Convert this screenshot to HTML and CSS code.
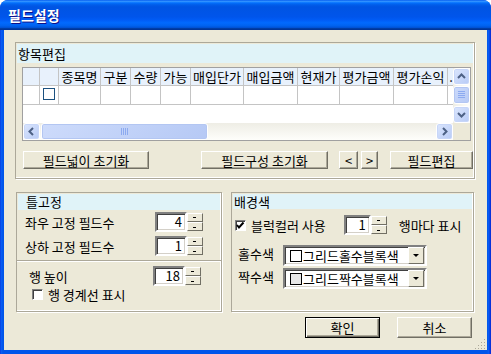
FILE: index.html
```html
<!DOCTYPE html>
<html>
<head lang="ko">
    <meta charset="UTF-8">
    <title>필드설정</title>
    <link rel="stylesheet" href="styles.css">
</head>
<body>
    <div class="window">
        <div class="titlebar"><span class="title">필드설정</span></div>
        <div class="client">
            <div class="group group-edit">
                <div class="group-head">항목편집</div>
                <div class="grid">
                    <div class="grid-body">
                        <div class="grid-row grid-head">
                            <div class="cell w17"></div>
                            <div class="cell w19"></div>
                            <div class="cell w42">종목명</div>
                            <div class="cell w30">구분</div>
                            <div class="cell w30">수량</div>
                            <div class="cell w30">가능</div>
                            <div class="cell w53">매입단가</div>
                            <div class="cell w54">매입금액</div>
                            <div class="cell w42">현재가</div>
                            <div class="cell w54">평가금액</div>
                            <div class="cell w54">평가손익</div>
                            <div class="cell w6">.</div>
                        </div>
                        <div class="grid-row grid-data">
                            <div class="cell w17"></div>
                            <div class="cell w19"><span class="grid-check"></span></div>
                            <div class="cell w42"></div>
                            <div class="cell w30"></div>
                            <div class="cell w30"></div>
                            <div class="cell w30"></div>
                            <div class="cell w53"></div>
                            <div class="cell w54"></div>
                            <div class="cell w42"></div>
                            <div class="cell w54"></div>
                            <div class="cell w54"></div>
                            <div class="cell w6"></div>
                        </div>
                    </div>
                    <div class="vscroll">
                        <div class="sb-btn">
                            <svg width="15" height="15" viewBox="0 0 15 15"><polyline points="4,9 7.5,5.5 11,9" fill="none" stroke="#4d6185" stroke-width="2"/></svg>
                        </div>
                        <div class="sb-thumb sb-thumb-v">
                            <svg width="8" height="8" viewBox="0 0 8 8"><path d="M0 0.5H7M0 2.5H7M0 4.5H7M0 6.5H7" stroke="#8caaf0"/></svg>
                        </div>
                        <div class="sb-track"></div>
                        <div class="sb-btn">
                            <svg width="15" height="15" viewBox="0 0 15 15"><polyline points="4,6 7.5,9.5 11,6" fill="none" stroke="#4d6185" stroke-width="2"/></svg>
                        </div>
                    </div>
                    <div class="hscroll">
                        <div class="sb-btn">
                            <svg width="15" height="15" viewBox="0 0 15 15"><polyline points="9,4 5.5,7.5 9,11" fill="none" stroke="#4d6185" stroke-width="2"/></svg>
                        </div>
                        <div class="sb-thumb sb-thumb-h">
                            <svg width="8" height="8" viewBox="0 0 8 8"><path d="M0.5 0V7M2.5 0V7M4.5 0V7M6.5 0V7" stroke="#8caaf0"/></svg>
                        </div>
                        <div class="sb-track"></div>
                        <div class="sb-btn">
                            <svg width="15" height="15" viewBox="0 0 15 15"><polyline points="6,4 9.5,7.5 6,11" fill="none" stroke="#4d6185" stroke-width="2"/></svg>
                        </div>
                    </div>
                    <div class="corner"></div>
                </div>
                <div class="btn-row">
                    <button class="btn btn-reset">필드넓이 초기화</button>
                    <button class="btn btn-layout">필드구성 초기화</button>
                    <button class="btn btn-prev">&lt;</button>
                    <button class="btn btn-next">&gt;</button>
                    <button class="btn btn-fields">필드편집</button>
                </div>
            </div>

            <div class="lower">
                <div class="group group-freeze">
                    <div class="group-head">틀고정</div>
                    <div class="freeze-row">
                        <span class="freeze-label">좌우 고정 필드수</span>
                        <div class="spin">
                            <div class="spin-edit">4</div>
                            <div class="spin-btns"><span class="spin-up"></span><span class="spin-down"></span></div>
                        </div>
                    </div>
                    <div class="freeze-row">
                        <span class="freeze-label">상하 고정 필드수</span>
                        <div class="spin">
                            <div class="spin-edit">1</div>
                            <div class="spin-btns"><span class="spin-up"></span><span class="spin-down"></span></div>
                        </div>
                    </div>
                    <div class="separator"></div>
                    <div class="freeze-row height-row">
                        <span class="freeze-label">행 높이</span>
                        <div class="spin">
                            <div class="spin-edit">18</div>
                            <div class="spin-btns"><span class="spin-up"></span><span class="spin-down"></span></div>
                        </div>
                    </div>
                    <label class="check-row">
                        <span class="check"></span>
                        <span>행 경계선 표시</span>
                    </label>
                </div>

                <div class="group group-color">
                    <div class="group-head">배경색</div>
                    <div class="block-row">
                        <span class="check checked">
                            <svg width="9" height="9" viewBox="0 0 9 9"><path d="M1 4L3 6.5L7.5 1.5" fill="none" stroke="#000" stroke-width="2"/></svg>
                        </span>
                        <span class="block-label">블럭컬러 사용</span>
                        <div class="spin spin-small">
                            <div class="spin-edit">1</div>
                            <div class="spin-btns"><span class="spin-up"></span><span class="spin-down"></span></div>
                        </div>
                        <span class="block-tail">행마다 표시</span>
                    </div>
                    <div class="color-row">
                        <span class="color-label">홀수색</span>
                        <div class="combo">
                            <span class="swatch"></span>
                            <span class="combo-text">그리드홀수블록색</span>
                            <span class="combo-btn"></span>
                        </div>
                    </div>
                    <div class="color-row even-row">
                        <span class="color-label">짝수색</span>
                        <div class="combo">
                            <span class="swatch swatch-gray"></span>
                            <span class="combo-text">그리드짝수블록색</span>
                            <span class="combo-btn"></span>
                        </div>
                    </div>
                </div>
            </div>

            <div class="dlg-buttons">
                <button class="btn btn-default">확인</button>
                <button class="btn btn-cancel">취소</button>
            </div>

            <svg class="grip" width="12" height="12" viewBox="0 0 12 12">
                <path d="M10 2h1v1h-1zM7 5h1v1h-1zM10 5h1v1h-1zM4 8h1v1h-1zM7 8h1v1h-1zM10 8h1v1h-1zM1 11h1v1h-1zM4 11h1v1h-1zM7 11h1v1h-1zM10 11h1v1h-1z" fill="#aca899"/>
            </svg>
        </div>
    </div>
</body>
</html>
```

FILE: styles.css
```css
*{
    margin: 0;
    padding: 0;
    box-sizing: border-box;
}
body{
    background: #fff;
    font-family: "Noto Sans CJK KR", "Noto Sans", sans-serif;
    font-size: 13px;
    color: #000;
}
button{
    font-family: inherit;
    font-size: 13px;
    color: #000;
}
.window{
    width: 491px;
    height: 354px;
    display: flex;
    flex-direction: column;
    background: linear-gradient(to right, #0831d9 0, #0a5ef5 1px, #0055ea 3px, #0055ea 487px, #0a5ef5 489px, #0831d9 490px);
    border-radius: 8px 8px 0 0;
}
.titlebar{
    height: 30px;
    border-radius: 8px 8px 0 0;
    background: linear-gradient(to bottom, #0058ee 0%, #3593ff 4%, #288eff 6%, #127dff 8%, #036ffc 10%, #0262ee 14%, #0057e5 20%, #0054e3 24%, #0055eb 56%, #005bf5 66%, #026afe 76%, #0062ef 86%, #0052d6 92%, #0040ab 94%, #003092 100%);
    padding: 6px 0 0 8px;
}
.title{
    color: #fff;
    font-size: 14px;
    font-weight: bold;
    line-height: 18px;
    text-shadow: 1px 1px #0f1089;
}
.client{
    position: relative;
    margin: 0 4px 4px 4px;
    height: 320px;
    background: #ece9d8;
    padding: 12px 0 0 11px;
}

/* group boxes */
.group{
    border: 1px solid #aca899;
    box-shadow: inset -1px -1px #fff, 1px 1px #fff;
}
.group-head{
    margin: 1px;
    background: #e0f3f8;
    padding-left: 1px;
}
.group-edit{
    width: 460px;
    height: 137px;
}
.group-edit .group-head{
    height: 19px;
    line-height: 19px;
}

/* grid */
.grid{
    margin: 4px 0 0 6px;
    width: 449px;
    height: 74px;
    border: 1px solid #a0a0a0;
    display: grid;
    grid-template-columns: 430px 17px;
    grid-template-rows: 55px 17px;
    background: #fff;
}
.grid-body{
    overflow: hidden;
}
.grid-row{
    display: flex;
}
.grid-head{
    height: 18px;
    background: #e8f1fc;
}
.grid-data{
    height: 19px;
}
.cell{
    flex: none;
    border-right: 1px solid #c4c4c4;
    border-bottom: 1px solid #c4c4c4;
    text-align: center;
    line-height: 17px;
    white-space: nowrap;
    overflow: hidden;
}
.w6{ width: 6px; border-right: none; }
.w17{ width: 17px; }
.w19{ width: 19px; }
.w30{ width: 30px; }
.w42{ width: 42px; }
.w53{ width: 53px; }
.w54{ width: 54px; }
.grid-check{
    display: inline-block;
    width: 12px;
    height: 12px;
    margin-top: 2px;
    border: 1px solid #1c5180;
    background: #fff;
    vertical-align: top;
}

/* scrollbars */
.vscroll{
    display: flex;
    flex-direction: column;
    background: linear-gradient(to right, #eeede5, #fefefb);
}
.hscroll{
    display: flex;
    background: linear-gradient(to bottom, #eeede5, #fefefb);
}
.sb-btn{
    flex: none;
    width: 17px;
    height: 17px;
    border: 1px solid #fff;
    border-radius: 3px;
    background: linear-gradient(135deg, #dbe6fd, #b8cbf6);
    box-shadow: inset 0 0 0 1px #c7d6f8;
    display: flex;
    align-items: center;
    justify-content: center;
}
.sb-thumb{
    flex: none;
    border: 1px solid #fff;
    border-radius: 3px;
    background: linear-gradient(135deg, #cddbfb, #b6c9f5);
    box-shadow: inset 0 0 0 1px #b3c6f2;
    display: flex;
    align-items: center;
    justify-content: center;
}
.sb-thumb-v{
    height: 18px;
    margin-top: 1px;
}
.sb-thumb-h{
    width: 167px;
    margin-left: 1px;
}
.sb-track{
    flex: 1;
}
.corner{
    background: #ece9d8;
}

/* buttons */
.btn{
    height: 18px;
    background: #ece9d8;
    border: 1px solid;
    border-color: #fff #716f64 #716f64 #fff;
    box-shadow: inset -1px -1px #aca899;
    line-height: 15px;
}
.btn-row{
    display: flex;
    margin-top: 10px;
    padding-left: 7px;
}
.btn-reset{ width: 126px; }
.btn-layout{ width: 127px; margin-left: 52px; }
.btn-prev{ width: 19px; margin-left: 11px; }
.btn-next{ width: 17px; margin-left: 3px; }
.btn-fields{ width: 83px; margin-left: 12px; }

.dlg-buttons{
    display: flex;
    justify-content: flex-end;
    gap: 17px;
    margin-top: 5px;
    padding-right: 15px;
}
.dlg-buttons .btn{
    width: 75px;
    height: 21px;
    line-height: 18px;
}
.btn-default{
    outline: 1px solid #000;
    outline-offset: -1px;
    border-color: #000;
    box-shadow: inset 1px 1px #fff, inset -1px -1px #716f64, inset -2px -2px #aca899;
}

/* lower group boxes */
.lower{
    display: flex;
    gap: 9px;
    margin: 13px 0 0 1px;
}
.group-freeze{
    width: 206px;
    height: 120px;
}
.group-color{
    width: 243px;
    height: 120px;
}
.group-freeze .group-head{
    height: 16px;
    line-height: 16px;
    padding-left: 8px;
}
.group-color .group-head{
    height: 15px;
    line-height: 15px;
    padding-left: 1px;
}
.freeze-row{
    display: flex;
    align-items: center;
    height: 20px;
    margin-top: 2px;
    padding-left: 8px;
}
.freeze-row + .freeze-row{
    margin-top: 4px;
}
.freeze-label{
    width: 130px;
}
.height-row{
    margin-top: 4px;
    padding-left: 12px;
}
.height-row .freeze-label{
    width: 124px;
}
.separator{
    margin-top: 4px;
    border-top: 1px solid #aca899;
    border-bottom: 1px solid #fff;
}

/* spin edit */
.spin{
    display: flex;
    height: 20px;
}
.spin-edit{
    width: 32px;
    height: 20px;
    background: #fff;
    border: 2px solid;
    border-color: #808080 #fff #fff #808080;
    box-shadow: inset 1px 1px #404040, inset -1px -1px #d4d0c8;
    text-align: right;
    padding-right: 3px;
    line-height: 16px;
}
.spin-btns{
    width: 16px;
    display: flex;
    flex-direction: column;
    padding: 1px 0;
}
.spin-btns span{
    flex: 1;
    position: relative;
    background: #ece9d8;
    border: 1px solid;
    border-color: #fff #716f64 #716f64 #fff;
}
.spin-btns span::after{
    content: "";
    position: absolute;
    left: 5px;
    width: 3px;
    height: 1px;
    background: #000;
}
.spin-up::after{ top: 3px; }
.spin-down::after{ top: 4px; }
.spin-small .spin-edit{
    width: 27px;
}

/* check boxes */
.check{
    flex: none;
    width: 11px;
    height: 11px;
    background: #fff;
    border: 1px solid;
    border-color: #808080 #fff #fff #808080;
    box-shadow: inset 1px 1px #404040;
    display: flex;
    align-items: center;
    justify-content: center;
}
.check-row{
    display: flex;
    align-items: center;
    gap: 5px;
    height: 14px;
    margin-top: 1px;
    padding-left: 15px;
}
.block-row{
    display: flex;
    align-items: center;
    height: 20px;
    margin-top: 6px;
    padding-left: 3px;
}
.block-label{
    margin-left: 5px;
}
.block-row .spin{
    margin-left: 18px;
}
.block-tail{
    margin-left: 12px;
}

/* colour combos */
.color-row{
    display: flex;
    align-items: flex-start;
    margin-top: 10px;
    padding-left: 6px;
}
.even-row{
    margin-top: 2px;
}
.color-label{
    width: 45px;
    line-height: 18px;
}
.combo{
    width: 144px;
    height: 21px;
    display: flex;
    align-items: center;
    background: #fff;
    border: 2px solid;
    border-color: #808080 #fff #fff #808080;
    box-shadow: inset 1px 1px #404040, inset -1px -1px #d4d0c8;
    padding-left: 5px;
}
.swatch{
    width: 12px;
    height: 12px;
    border: 1px solid #000;
    background: #fff;
}
.swatch-gray{
    background: #e6e6e6;
}
.combo-text{
    flex: 1;
    margin-left: 1px;
    white-space: nowrap;
}
.combo-btn{
    position: relative;
    width: 16px;
    height: 17px;
    margin-right: 1px;
    background: #ece9d8;
    border: 1px solid;
    border-color: #fff #716f64 #716f64 #fff;
}
.combo-btn::after{
    content: "";
    position: absolute;
    left: 4px;
    top: 6px;
    border: 3px solid transparent;
    border-top: 3px solid #000;
    border-bottom: none;
}

.grip{
    position: absolute;
    right: 1px;
    bottom: 1px;
}
```
